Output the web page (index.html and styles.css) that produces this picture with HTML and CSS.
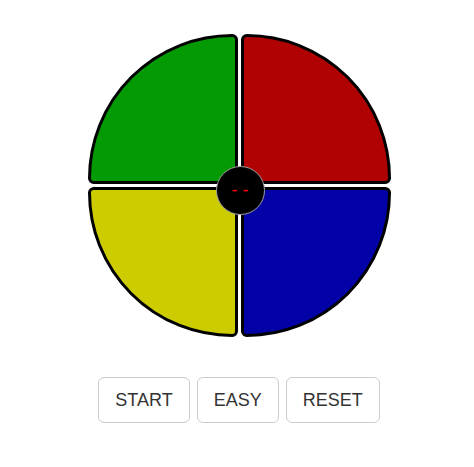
FILE: index.html
```html
<!DOCTYPE html>
<html>
<head>
<meta charset="utf-8">
<link rel="stylesheet" href="styles.css">
</head>
<body>
<div class="app">
  <div class="board">
    <div class="pad green"></div>
    <div class="pad red"></div>
    <div class="pad yellow"></div>
    <div class="pad blue"></div>
    <div class="hub"><span class="count">- -</span></div>
  </div>
  <div class="controls">
    <button class="btn">START</button>
    <button class="btn">EASY</button>
    <button class="btn">RESET</button>
  </div>
</div>
</body>
</html>
```
FILE: styles.css
```css
* { box-sizing: border-box; }
html, body { margin: 0; padding: 0; background: #fff; }
body { font-family: "Liberation Sans", Arial, sans-serif; }
.app {
  display: flex;
  flex-direction: column;
  align-items: center;
  padding: 34px 0 0 4px;
}
.board {
  position: relative;
  display: grid;
  grid-template-columns: 150px 150px;
  grid-template-rows: 150px 150px;
  gap: 3px;
}
.pad {
  border: 3px solid #000;
  border-radius: 6px;
}
.green { background: #049a04; border-top-left-radius: 150px; }
.red { background: #b00202; border-top-right-radius: 150px; }
.yellow { background: #cccc00; border-bottom-left-radius: 150px; }
.blue { background: #0202a6; border-bottom-right-radius: 150px; }
.hub {
  position: absolute;
  left: 128px;
  top: 132px;
  width: 49px;
  height: 49px;
  border-radius: 50%;
  background: #000;
  border: 1px solid #a0a0a0;
  display: flex;
  align-items: center;
  justify-content: center;
}
.count {
  color: #f00;
  font-size: 18px;
  line-height: 1;
  margin-top: -1px;
  white-space: pre;
}
.controls {
  display: flex;
  gap: 7px;
  margin-top: 40px;
}
.btn {
  font-family: "Liberation Sans", Arial, sans-serif;
  font-size: 18px;
  line-height: 24px;
  padding: 10px 16px;
  color: #333;
  background: #fff;
  border: 1px solid #ccc;
  border-radius: 6px;
}
```
